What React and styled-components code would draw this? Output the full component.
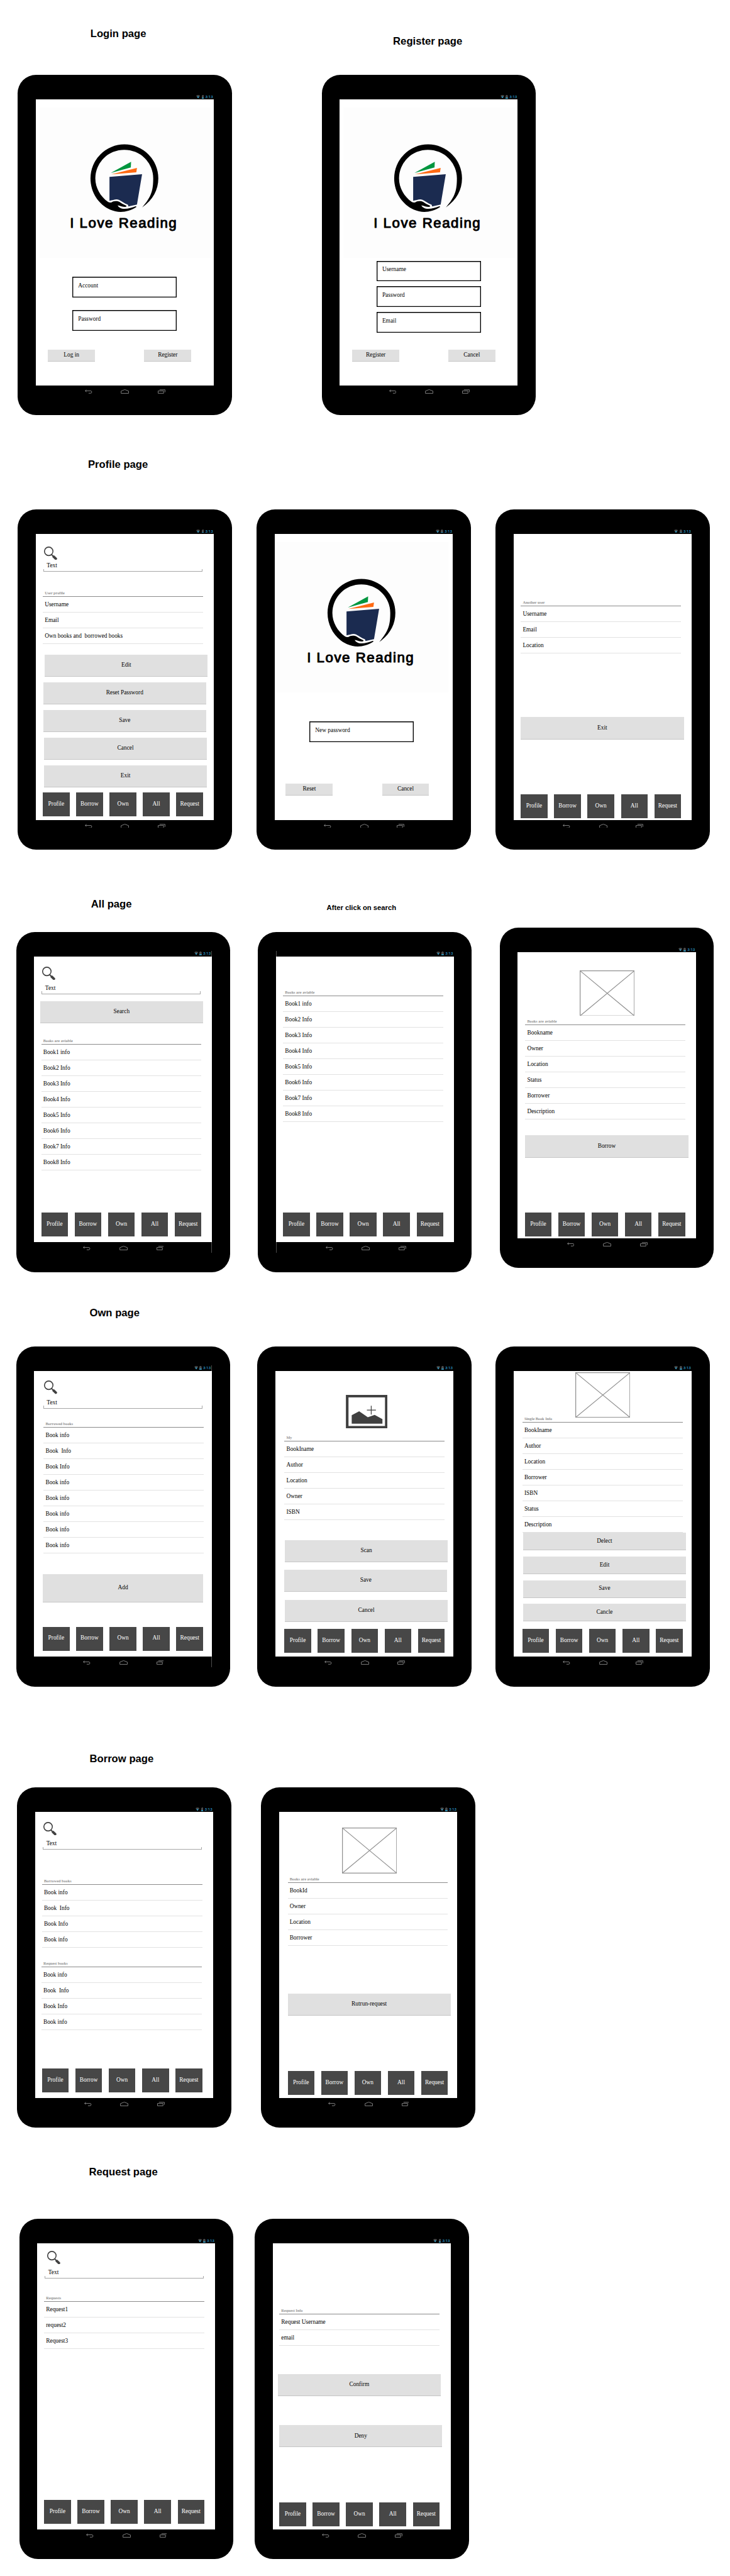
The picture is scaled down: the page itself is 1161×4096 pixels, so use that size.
import React from "react";
import styled, { createGlobalStyle, css } from "styled-components";

/* The board is designed on a 1858px wide canvas and drawn at 0.6248 of it. */
const px = (n) => `${(n * 0.6248).toFixed(3)}px`;

const serif = '"Liberation Serif", "Times New Roman", serif';
const sans = '"Liberation Sans", Arial, sans-serif';

const GlobalStyle = createGlobalStyle`
  *, *::before, *::after { box-sizing: border-box; }
  body { margin: 0; background: #fff; }
`;

const Board = styled.main`
  display: flex;
  flex-direction: column;
  width: 1161px;
  height: 4096px;
  overflow: hidden;
  background: #fff;
  color: #000;
  font-family: ${serif};
  font-size: ${px(15)};
`;

const Section = styled.section`
  flex: none;
  padding-top: ${(p) => px(p.$top)};
`;

const Titles = styled.header`
  display: flex;
  align-items: flex-start;
  height: ${px(50)};
`;

const Title = styled.h2`
  flex: none;
  width: ${px(240)};
  margin: ${(p) => px(p.$drop || 0)} 0 0 ${(p) => px(p.$left)};
  font: bold ${(p) => px(p.$small ? 18 : 26.67)} / ${px(30)} ${sans};
  white-space: nowrap;
`;

const Tablets = styled.div`
  display: flex;
  align-items: flex-start;
  margin-top: ${(p) => px(p.$top)};
`;

const Shell = styled.article`
  flex: none;
  display: flex;
  flex-direction: column;
  width: ${px(545)};
  height: ${px(865.5)};
  margin: ${(p) => px(p.$drop || 0)} 0 0 ${(p) => px(p.$left)};
  padding: ${px(48.3)} ${px(46)} 0;
  border-radius: ${px(47)};
  background: #000;
`;

const seamSide = css`
  ${(p) => p.$seam === "right" && "border-right: 1px solid #4c4c4c;"}
  ${(p) => p.$seam === "left" && "border-left: 1px solid #4c4c4c;"}
`;

const StatusBar = styled.div`
  flex: none;
  display: flex;
  justify-content: flex-end;
  align-items: flex-start;
  gap: ${px(3.5)};
  height: ${px(14)};
  padding: ${px(2)} ${px(2)} 0 0;
  color: #33b5e5;
  font: ${px(10)} / ${px(10)} Roboto, sans-serif;
  ${seamSide}
`;

const SystemBar = styled.div`
  flex: none;
  display: flex;
  align-items: flex-start;
  gap: ${px(73)};
  height: ${px(27)};
  padding: ${px(9.5)} 0 0 ${px(125)};
  ${seamSide}
`;

const Screen = styled.div`
  flex: none;
  display: flex;
  flex-direction: column;
  align-items: flex-start;
  height: ${px(727.7)};
  background: #fff;
`;

const Glyph = styled.svg`
  display: block;
  flex: none;
  width: ${(p) => px(p.$w)};
  height: ${(p) => px(p.$h)};
  margin-top: ${(p) => px(p.$top || 0)};
  margin-left: ${(p) => px(p.$left || 0)};
`;

const Input = styled.div`
  flex: none;
  width: ${px(266)};
  height: ${px(52.4)};
  margin: ${(p) => px(p.$top)} 0 0 ${(p) => px(p.$left || 93)};
  padding: ${px(1.5)} 0 0 ${px(15)};
  box-shadow: inset 0 0 0 ${px(2.2)} #000;
  line-height: ${px(44.5)};
`;

const ButtonPair = styled.div`
  flex: none;
  display: flex;
  gap: ${px(125)};
  margin: ${(p) => px(p.$top)} 0 0 ${(p) => px(p.$left)};
`;

const Button = styled.div`
  flex: none;
  display: flex;
  align-items: center;
  justify-content: center;
  width: ${(p) => px(p.$w || 415)};
  height: ${(p) => px(p.$h || 56)};
  margin: ${(p) => px(p.$top || 0)} 0 0 ${(p) => px(p.$left || 0)};
  padding-bottom: ${px(1)};
  border-bottom: 1px solid #c6c6c6;
  background: #e0e0e0;
  line-height: ${px(18)};
`;

const Field = styled.div`
  flex: none;
  width: ${px(405)};
  height: ${px(24)};
  margin: ${(p) => px(p.$top)} 0 0 ${(p) => px(p.$left)};
  line-height: ${px(17)};
`;

const FieldText = styled.div`
  height: ${px(17)};
  padding-left: ${px(9)};
`;

const FieldBracket = styled.div`
  height: ${px(7)};
  border: 1px solid #a6a6a6;
  border-top: 0;
`;

const ListBox = styled.div`
  flex: none;
  width: ${px(408)};
  margin: ${(p) => px(p.$top)} 0 0 ${(p) => px(p.$left)};
`;

const ListLabel = styled.div`
  height: ${px(16)};
  padding-left: ${px(5)};
  border-bottom: 1px solid #8a8a8a;
  color: #929292;
  font-size: ${px(10)};
  font-weight: bold;
  line-height: ${px(12)};
`;

const ListRow = styled.div`
  height: ${px(40)};
  padding-left: ${px(5)};
  border-bottom: 1px solid #e2e2e2;
  line-height: ${px(40)};
  white-space: pre;
`;

const NavBar = styled.nav`
  flex: none;
  display: flex;
  gap: ${px(17)};
  margin: auto 0 ${(p) => px(p.$bottom)} ${(p) => px(p.$left)};
`;

const NavItem = styled.div`
  display: flex;
  align-items: center;
  justify-content: center;
  width: ${px(68)};
  height: ${px(61)};
  padding-bottom: ${px(2)};
  background: #474747;
  color: #fff;
  line-height: ${px(18)};
`;

function Tablet({ left, drop, seam, children }) {
  return (
    <Shell $left={left} $drop={drop}>
      <StatusBar $seam={seam}>
        <Glyph $w={10} $h={9} viewBox="0 0 10 9">
          <path d="M0 2Q5-1.6 10 2L5 9Z" fill="#464646" />
          <path d="M2.3 4.6Q5 3 7.7 4.6L5 9Z" fill="#2c94bb" />
        </Glyph>
        <Glyph $w={6} $h={9.5} viewBox="0 0 6 9.5">
          <path d="M0 1.2H1.5V0H4.5V1.2H6V9.5H0Z" fill="#4a4a4a" />
          <path d="M0 6.6H6V9.5H0Z" fill="#2c94bb" />
        </Glyph>
        <span>3:13</span>
      </StatusBar>
      <Screen>{children}</Screen>
      <SystemBar $seam={seam}>
        <Glyph $w={19} $h={11} viewBox="0 0 19 11" fill="none" stroke="#9a9a9a" strokeWidth="1.3">
          <path d="M4 1L1 4L4 7M1 4H14.5A3 3 0 0 1 14.5 10H9.5" />
        </Glyph>
        <Glyph $w={21} $h={11} viewBox="0 0 21 11" fill="none" stroke="#9a9a9a" strokeWidth="1.3">
          <path d="M1 10.3V4.5L10.5.8L20 4.5V10.3Z" />
        </Glyph>
        <Glyph $w={19} $h={11} viewBox="0 0 19 11" fill="none" stroke="#9a9a9a" strokeWidth="1.3">
          <path d="M.8 4.2H14.8V10.2H.8ZM4.5 1.2H18.3V7.5" />
        </Glyph>
      </SystemBar>
    </Shell>
  );
}

function Logo({ left }) {
  return (
    <Glyph $w={437} $h={382} $top={20.5} $left={left} viewBox="0 0 437 382">
      <rect width="437" height="382" fill="#fdfdfd" />
      <g transform="translate(58.5 76.5) scale(.33333)">
        <path
          d="M608 533C690 475 731 400 731 311A259 259 0 1 0 213 311C213 420 275 510 362 550C430 580 500 570 561 532Q567 525 558 524C520 540 465 552 440 536Q424 527 420 517C445 522 462 530 478 529Q493 527 486 519C465 509 450 503 436 492C415 480 385 484 374 494Q360 499 345 490C290 450 250 385 250 311A221 218 0 0 1 692 311C692 400 680 450 608 533Z"
          fill="#000"
        />
        <path
          d="M358 300L607 279L568 511L503 526L499 512C470 502 450 484 430 475C405 466 385 480 358 482Z"
          fill="#1b2b50"
        />
        <path d="M368 270L523 185L521 228Z" fill="#00963f" />
        <path d="M372 281L568 231L563 265Z" fill="#ff6a13" />
        <text
          x="56"
          y="687"
          fontFamily="Liberation Sans, Arial, sans-serif"
          fontSize="107"
          stroke="#000"
          strokeWidth="5"
          strokeLinejoin="round"
          textLength="814"
          lengthAdjust="spacing"
        >
          I Love Reading
        </text>
      </g>
    </Glyph>
  );
}

function Search({ top, left, iconLeft, gap }) {
  return (
    <>
      <Glyph $w={34} $h={34} $top={top} $left={iconLeft} viewBox="0 0 34 34">
        <circle cx="12" cy="12.2" r="10.8" fill="none" stroke="#404040" strokeWidth="2.5" />
        <path d="M19.3 20.6L22.5 24" stroke="#404040" strokeWidth="3" />
        <path d="M24.6 25.8L30 31" stroke="#404040" strokeWidth="6.4" strokeLinecap="round" />
      </Glyph>
      <Field $top={gap} $left={left}>
        <FieldText>Text</FieldText>
        <FieldBracket />
      </Field>
    </>
  );
}

function List({ top, left, label, rows }) {
  return (
    <ListBox $top={top} $left={left}>
      <ListLabel>{label}</ListLabel>
      {rows.map((row, i) => (
        <ListRow key={i}>{row}</ListRow>
      ))}
    </ListBox>
  );
}

function Placeholder({ top, left, h }) {
  return (
    <Glyph $w={140} $h={h} $top={top} $left={left} viewBox={`0 0 140 ${h}`} fill="none" stroke="#919191" strokeWidth="2">
      <rect x="1" y="1" width="138" height={h - 2} />
      <path d={`M1 1L139 ${h - 1}M139 1L1 ${h - 1}`} />
    </Glyph>
  );
}

function AddPicture({ top, left }) {
  return (
    <Glyph $w={106.5} $h={85.7} $top={top} $left={left} viewBox="0 0 106.5 85.7">
      <rect x="3.5" y="3" width="99.5" height="79.4" fill="#fff" stroke="#404040" strokeWidth="6.6" />
      <path d="M15 51.6L34 41.7L56 57L73.4 51L93.2 61.6V73.3H15Z" fill="#404040" />
      <path d="M53.7 38.7H76.6M64.7 27.6V49.9" stroke="#404040" strokeWidth="2" />
    </Glyph>
  );
}

function Nav({ left, bottom }) {
  return (
    <NavBar $left={left} $bottom={bottom}>
      {["Profile", "Borrow", "Own", "All", "Request"].map((name) => (
        <NavItem key={name}>{name}</NavItem>
      ))}
    </NavBar>
  );
}

const books = ["Book1 info", ...[2, 3, 4, 5, 6, 7, 8].map((n) => `Book${n} Info`)];
const fewBooks = ["Book info", "Book  Info", "Book Info", "Book info"];

export default function App() {
  return (
    <Board>
      <GlobalStyle />

      <Section $top={71.5}>
        <Titles>
          <Title $left={230}>Login page</Title>
          <Title $left={530.5} $drop={19.9}>Register page</Title>
        </Titles>
        <Tablets $top={69.3}>
          <Tablet left={45}>
            <Logo left={10.5} />
            <Input $top={48.5}>Account</Input>
            <Input $top={32.6}>Password</Input>
            <ButtonPair $top={49} $left={31}>
              <Button $w={120} $h={30}>Log in</Button>
              <Button $w={120} $h={30}>Register</Button>
            </ButtonPair>
          </Tablet>
          <Tablet left={229}>
            <Logo left={8.2} />
            <Input $top={8}>Username</Input>
            <Input $top={12.8}>Password</Input>
            <Input $top={12.8}>Email</Input>
            <ButtonPair $top={44} $left={32}>
              <Button $w={119} $h={30}>Register</Button>
              <Button $w={120} $h={30}>Cancel</Button>
            </ButtonPair>
          </Tablet>
        </Tablets>
      </Section>

      <Section $top={112.5}>
        <Titles>
          <Title $left={224}>Profile page</Title>
        </Titles>
        <Tablets $top={77.9}>
          <Tablet left={45}>
            <Search top={31.3} left={19} iconLeft={21} gap={7.1} />
            <List top={48.4} left={18} label="User profile" rows={["Username", "Email", "Own books and  borrowed books"]} />
            <Button $top={27} $left={23}>Edit</Button>
            <Button $top={14.2} $left={19}>Reset Password</Button>
            <Button $top={14.2} $left={19}>Save</Button>
            <Button $top={14.2} $left={21}>Cancel</Button>
            <Button $top={14.2} $left={21}>Exit</Button>
            <Nav left={18} bottom={9.4} />
          </Tablet>
          <Tablet left={63.7}>
            <Logo left={4.7} />
            <Input $top={75} $left={87.7}>New password</Input>
            <ButtonPair $top={106} $left={27.7}>
              <Button $w={120} $h={30}>Reset</Button>
              <Button $w={120} $h={30}>Cancel</Button>
            </ButtonPair>
          </Tablet>
          <Tablet left={63}>
            <List top={168.7} left={18} label="Another user" rows={["Username", "Email", "Location"]} />
            <Button $top={161.3} $left={18} $h={57}>Exit</Button>
            <Nav left={18} bottom={4.3} />
          </Tablet>
        </Tablets>
      </Section>

      <Section $top={124.4}>
        <Titles>
          <Title $left={231.7}>All page</Title>
          <Title $left={359.9} $drop={8.8} $small>After click on search</Title>
        </Titles>
        <Tablets $top={24.8}>
          <Tablet left={41} drop={10.3} seam="right">
            <Search top={25.5} left={19} iconLeft={21} gap={12.6} />
            <Button $top={18.6} $left={15}>Search</Button>
            <List top={38.8} left={18} label="Books are aviable" rows={books} />
            <Nav left={18} bottom={14.7} />
          </Tablet>
          <Tablet left={70} drop={10.3} seam="left">
            <List top={86} left={18.5} label="Books are aviable" rows={books} />
            <Nav left={18.5} bottom={14.7} />
          </Tablet>
          <Tablet left={71}>
            <Placeholder top={45.3} left={157} h={116.7} />
            <List
              top={7}
              left={19}
              label="Books are aviable"
              rows={["Bookname", "Owner", "Location", "Status", "Borrower", "Description"]}
            />
            <Button $top={41} $left={19} $h={57.5}>Borrow</Button>
            <Nav left={18} bottom={4.7} />
          </Tablet>
        </Tablets>
      </Section>

      <Section $top={91.1}>
        <Titles>
          <Title $left={228}>Own page</Title>
        </Titles>
        <Tablets $top={48.4}>
          <Tablet left={41} seam="right">
            <Search top={25} left={23} iconLeft={25} gap={13} />
            <List
              top={33}
              left={24}
              label="Borrowed books"
              rows={[...fewBooks, "Book info", "Book info", "Book info", "Book info"]}
            />
            <Button $top={53} $left={22} $w={408} $h={71.4}>Add</Button>
            <Nav left={22} bottom={15.7} />
          </Tablet>
          <Tablet left={69.3}>
            <AddPicture top={60.6} left={178.5} />
            <List top={18} left={22.7} label="My" rows={["BookIname", "Author", "Location", "Owner", "ISBN"]} />
            <Button $top={50.5} $left={23.7}>Scan</Button>
            <Button $top={20} $left={22.5}>Save</Button>
            <Button $top={20} $left={23.7}>Cancel</Button>
            <Nav left={22.7} bottom={9.9} />
          </Tablet>
          <Tablet left={61.4}>
            <Placeholder top={3} left={156.3} h={115.7} />
            <List
              top={-2.5}
              left={22}
              label="Single Book Info"
              rows={["BookIname", "Author", "Location", "Borrower", "ISBN", "Status", "Description"]}
            />
            <Button $left={23.7} $h={45}>Delect</Button>
            <Button $top={15.5} $left={23.7} $h={45}>Edit</Button>
            <Button $top={15} $left={23.7} $h={45}>Save</Button>
            <Button $top={15} $left={23.7} $h={45}>Cancle</Button>
            <Nav left={22} bottom={9.9} />
          </Tablet>
        </Tablets>
      </Section>

      <Section $top={169.6}>
        <Titles>
          <Title $left={228}>Borrow page</Title>
        </Titles>
        <Tablets $top={37.9}>
          <Tablet left={43.4}>
            <Search top={25} left={19.5} iconLeft={20.5} gap={13} />
            <List top={73} left={17.5} label="Borrowed books" rows={fewBooks} />
            <List top={33.2} left={16} label="Request books" rows={fewBooks} />
            <Nav left={17.5} bottom={14.7} />
          </Tablet>
          <Tablet left={76.6}>
            <Placeholder top={40} left={159} h={116.8} />
            <List top={7.2} left={21.3} label="Books are aviable" rows={["BookId", "Owner", "Location", "Borrower"]} />
            <Button $top={121.8} $left={21.3}>Rutrun-request</Button>
            <Nav left={21.3} bottom={8.4} />
          </Tablet>
        </Tablets>
      </Section>

      <Section $top={99.6}>
        <Titles>
          <Title $left={226.5}>Request page</Title>
        </Titles>
        <Tablets $top={82.9}>
          <Tablet left={48.9}>
            <Search top={19} left={19} iconLeft={25.3} gap={12.5} />
            <List top={43.4} left={17.4} label="Requests" rows={["Request1", "request2", "Request3"]} />
            <Nav left={17.4} bottom={14.7} />
          </Tablet>
          <Tablet left={54.4}>
            <List top={165} left={16.7} label="Request Info" rows={["Request Username", "email"]} />
            <Button $top={71} $left={12.7}>Confirm</Button>
            <Button $top={74.8} $left={16.7}>Deny</Button>
            <Nav left={16.7} bottom={7.7} />
          </Tablet>
        </Tablets>
      </Section>
    </Board>
  );
}
